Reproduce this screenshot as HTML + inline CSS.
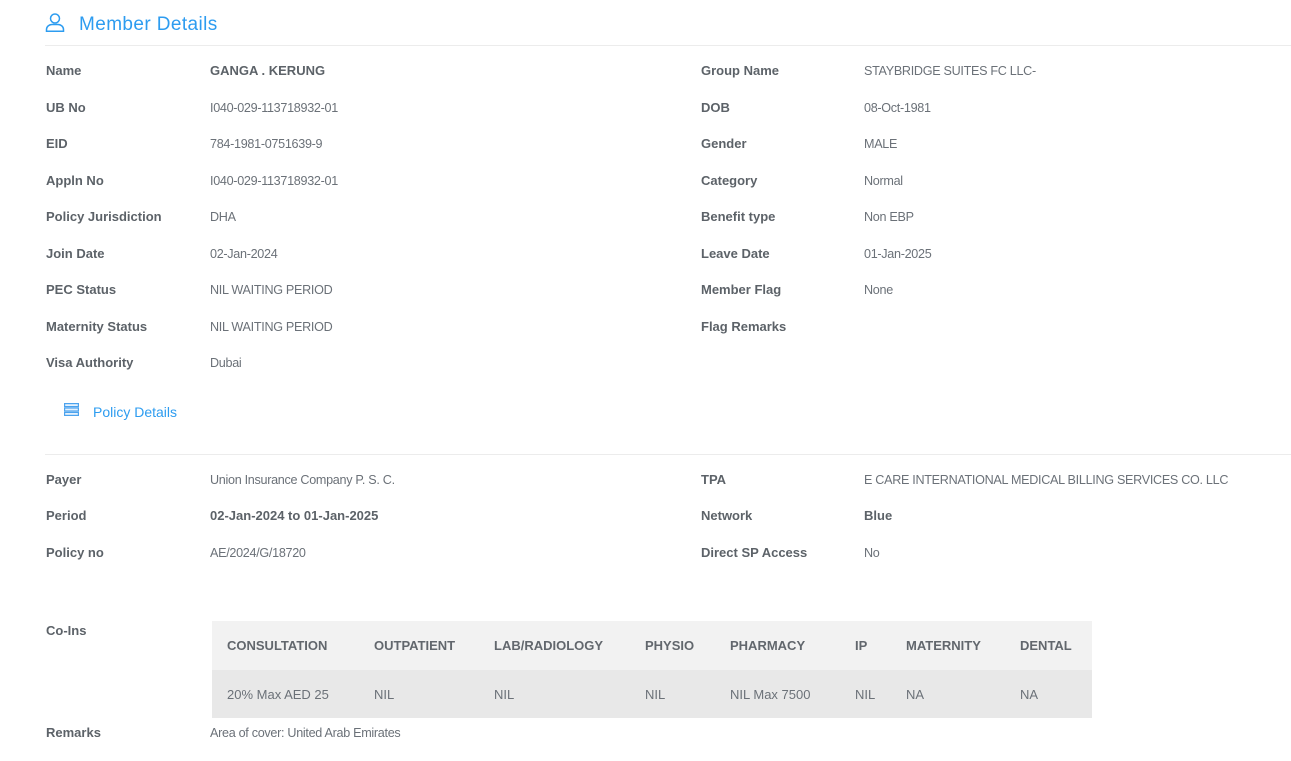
<!DOCTYPE html>
<html><head><meta charset="utf-8"><style>
body{margin:0;width:1291px;height:761px;background:#fff;font-family:"Liberation Sans",sans-serif;position:relative;overflow:hidden}
.a{position:absolute;white-space:nowrap;font-size:13px;line-height:16px;margin-top:1px}
.l{font-weight:bold;color:#5c6268}
.v{color:#6b7178;font-size:12.6px;letter-spacing:-0.3px}
.b{font-weight:bold;color:#5c6268}
.hr{position:absolute;left:45px;right:0;height:1px;background:#ececec}
table{position:absolute;left:212px;top:621px;width:880px;border-collapse:collapse;font-size:13px;table-layout:fixed}
th{background:#f2f2f2;height:49px;text-align:left;color:#62676d;font-weight:bold;padding:0}
td{background:#e8e8e8;height:48px;color:#6b7178;padding:0}
</style></head><body>
<svg style="position:absolute;left:45px;top:12px" width="20" height="20" viewBox="0 0 20 20" fill="none" stroke="#2d9cf0" stroke-width="1.5"><circle cx="10" cy="6.5" r="4.5"/><path d="M1.5 19.2v-1.5c0-3 2.5-5.2 5.5-5.2h6c3 0 5.5 2.2 5.5 5.2v1.5z"/></svg>
<div class="a" style="left:79px;top:12px;font-size:19px;line-height:24px;color:#2d9cf0;letter-spacing:0.4px">Member Details</div>
<div class="hr" style="top:45px"></div>

<div class="a l" style="left:46px;top:62px">Name</div><div class="a b" style="left:210px;top:62px">GANGA . KERUNG</div>
<div class="a l" style="left:46px;top:99px">UB No</div><div class="a v" style="left:210px;top:99px">I040-029-113718932-01</div>
<div class="a l" style="left:46px;top:135px">EID</div><div class="a v" style="left:210px;top:135px">784-1981-0751639-9</div>
<div class="a l" style="left:46px;top:172px">Appln No</div><div class="a v" style="left:210px;top:172px">I040-029-113718932-01</div>
<div class="a l" style="left:46px;top:208px">Policy Jurisdiction</div><div class="a v" style="left:210px;top:208px">DHA</div>
<div class="a l" style="left:46px;top:245px">Join Date</div><div class="a v" style="left:210px;top:245px">02-Jan-2024</div>
<div class="a l" style="left:46px;top:281px">PEC Status</div><div class="a v" style="left:210px;top:281px">NIL WAITING PERIOD</div>
<div class="a l" style="left:46px;top:318px">Maternity Status</div><div class="a v" style="left:210px;top:318px">NIL WAITING PERIOD</div>
<div class="a l" style="left:46px;top:354px">Visa Authority</div><div class="a v" style="left:210px;top:354px">Dubai</div>

<div class="a l" style="left:701px;top:62px">Group Name</div><div class="a v" style="left:864px;top:62px">STAYBRIDGE SUITES FC LLC-</div>
<div class="a l" style="left:701px;top:99px">DOB</div><div class="a v" style="left:864px;top:99px">08-Oct-1981</div>
<div class="a l" style="left:701px;top:135px">Gender</div><div class="a v" style="left:864px;top:135px">MALE</div>
<div class="a l" style="left:701px;top:172px">Category</div><div class="a v" style="left:864px;top:172px">Normal</div>
<div class="a l" style="left:701px;top:208px">Benefit type</div><div class="a v" style="left:864px;top:208px">Non EBP</div>
<div class="a l" style="left:701px;top:245px">Leave Date</div><div class="a v" style="left:864px;top:245px">01-Jan-2025</div>
<div class="a l" style="left:701px;top:281px">Member Flag</div><div class="a v" style="left:864px;top:281px">None</div>
<div class="a l" style="left:701px;top:318px">Flag Remarks</div>

<svg style="position:absolute;left:64px;top:403px" width="15" height="13" viewBox="0 0 15 13" fill="#e6f2fd" stroke="#4ca3ee" stroke-width="1.2"><rect x="0.6" y="0.6" width="13.8" height="3"/><rect x="0.6" y="5" width="13.8" height="3"/><rect x="0.6" y="9.4" width="13.8" height="3"/></svg>
<div class="a" style="left:93px;top:403px;font-size:14px;line-height:17px;color:#2d9cf0">Policy Details</div>
<div class="hr" style="top:454px"></div>

<div class="a l" style="left:46px;top:471px">Payer</div><div class="a v" style="left:210px;top:471px">Union Insurance Company P. S. C.</div>
<div class="a l" style="left:46px;top:507px">Period</div><div class="a b" style="left:210px;top:507px">02-Jan-2024 to 01-Jan-2025</div>
<div class="a l" style="left:46px;top:544px">Policy no</div><div class="a v" style="left:210px;top:544px">AE/2024/G/18720</div>
<div class="a l" style="left:701px;top:471px">TPA</div><div class="a v" style="left:864px;top:471px">E CARE INTERNATIONAL MEDICAL BILLING SERVICES CO. LLC</div>
<div class="a l" style="left:701px;top:507px">Network</div><div class="a b" style="left:864px;top:507px">Blue</div>
<div class="a l" style="left:701px;top:544px">Direct SP Access</div><div class="a v" style="left:864px;top:544px">No</div>

<div class="a l" style="left:46px;top:622px">Co-Ins</div>
<table>
<colgroup><col style="width:162px"><col style="width:120px"><col style="width:151px"><col style="width:85px"><col style="width:125px"><col style="width:51px"><col style="width:114px"><col style="width:72px"></colgroup>
<tr><th style="padding-left:15px">CONSULTATION</th><th>OUTPATIENT</th><th>LAB/RADIOLOGY</th><th>PHYSIO</th><th>PHARMACY</th><th>IP</th><th>MATERNITY</th><th>DENTAL</th></tr>
<tr><td style="padding-left:15px">20% Max AED 25</td><td>NIL</td><td>NIL</td><td>NIL</td><td>NIL Max 7500</td><td>NIL</td><td>NA</td><td>NA</td></tr>
</table>
<div class="a l" style="left:46px;top:724px">Remarks</div><div class="a v" style="left:210px;top:724px">Area of cover: United Arab Emirates</div>
</body></html>
